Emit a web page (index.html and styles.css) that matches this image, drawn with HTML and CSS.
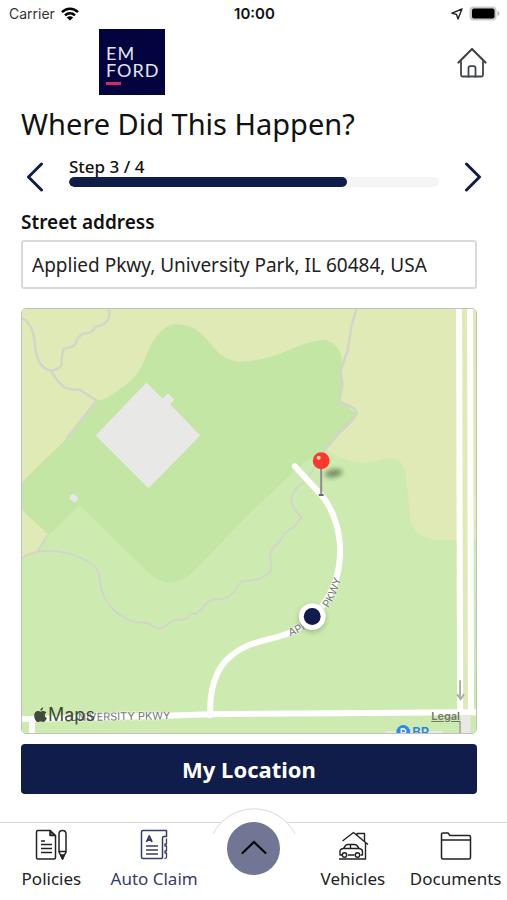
FILE: index.html
```html
<!DOCTYPE html>
<html lang="en">
    <head>
        <meta charset="UTF-8">
        <meta name="viewport" content="width=device-width, initial-scale=1">
        <title>Where Did This Happen?</title>
        <link rel="stylesheet" href="styles.css">
    </head>
    <body>
        <div class="status-bar">
            <div class="carrier">
                <span>Carrier</span>
                <svg width="18" height="14" viewBox="0 0 18 14" fill="none" stroke="#000" stroke-width="2.6">
                    <path d="M1 5.2C5.5 0.6 12.5 0.6 17 5.2"/>
                    <path d="M4 8.4c3-2.8 7-2.8 10 0"/>
                    <path d="M9 13.6L5.8 10.5c1.8-1.6 4.600-1.600 6.400 0z" fill="#000" stroke="none"/>
                </svg>
            </div>
            <div class="time">10:00</div>
            <div class="battery">
                <svg width="12" height="12" viewBox="0 0 12 12" fill="none" stroke="#222" stroke-width="1.4" stroke-linejoin="round">
                    <path d="M11 1L1 5.200l4.500 1.200L7 11z"/>
                </svg>
                <svg width="31" height="15" viewBox="0 0 31 15">
                    <rect x="0.500" y="0.500" width="27" height="14" rx="4" fill="#c9c9c5"/>
                    <path d="M28.500 5c2.500 1 2.500 4 0 5z" fill="#b5b5b1"/>
                    <rect x="3" y="2.500" width="22.500" height="10" rx="2" fill="#000"/>
                </svg>
            </div>
        </div>

        <header class="header">
            <div class="logo">
                <span>EM</span>
                <span>FORD</span>
                <i class="logo-dash"></i>
            </div>
            <a class="home" href="#" aria-label="Home">
                <svg width="30" height="31" viewBox="0 0 30 31" fill="none" stroke="#414549" stroke-width="1.800" stroke-linejoin="round" stroke-linecap="round">
                    <path d="M1.500 15.500L15 2l13.500 13.500" stroke-width="2.200"/>
                    <path d="M4 14.500V28q0 1.500 1.500 1.500h19q1.500 0 1.500-1.500V14.500"/>
                    <path d="M11.500 29.500V21q0-1.800 1.800-1.800h3.400q1.800 0 1.800 1.800v8.500"/>
                </svg>
            </a>
        </header>

        <main class="main">
            <h1>Where Did This Happen?</h1>

            <div class="steps">
                <button class="arrow" type="button" aria-label="Previous step">
                    <svg width="18" height="30" viewBox="0 0 18 30"><path d="M15.500 2L2.500 15l13 13"/></svg>
                </button>
                <div class="step">
                    <label for="progress">Step 3 / 4</label>
                    <progress id="progress" value="3" max="4"></progress>
                </div>
                <button class="arrow" type="button" aria-label="Next step">
                    <svg width="18" height="30" viewBox="0 0 18 30"><path d="M2.500 2l13 13-13 13"/></svg>
                </button>
            </div>

            <label class="field-label" for="address">Street address</label>
            <input class="field" id="address" type="text" value="Applied Pkwy, University Park, IL 60484, USA">

            <div class="map">
                <svg class="map-canvas" viewBox="21 308 456 426" preserveAspectRatio="xMidYMid slice">
                    <defs>
                        <filter id="blur" x="-50%" y="-50%" width="200%" height="200%"><feGaussianBlur stdDeviation="2.500"/></filter>
                        <path id="road-label" d="M290 637Q316 628 331 605Q341 588 346 562"/>
                    </defs>
                    <!-- land -->
                    <rect x="21" y="308" width="456" height="426" fill="#cdebb0"/>
                    <path fill="#e0eab7" d="M21 308H477V540H440Q414 538 411 520L407 478Q405 456 388 458Q372 463 358 462Q340 460 325 448L240 400L21 490Z"/>
                    <path fill="#e0eab7" d="M21 505L48 535L37 551L21 558Z"/>
                    <path fill="#c3e6a5" d="M21 482L66 438L97 400Q107 399 120 388Q132 380 140 368L151 343Q163 324 176 323L191 326Q201 331 212 345Q223 360 240 361Q265 360 287 350Q310 340 325 339Q342 343 343 365L341 371L343 385L340 398L346 405L357 413L326 449L302 464L250 513L195 570Q170 595 146 571L92 518L79 505L48 535L21 510Z"/>
                    <!-- trails -->
                    <g fill="none" stroke="#d3d5c8" stroke-width="2.500" stroke-linejoin="round" stroke-linecap="round">
                        <path d="M21 317Q33 324 34 345Q36 367 50 370Q57 382 64 387Q72 390 79 389Q87 395 96 400L66 438"/>
                        <path d="M108 308Q112 322 95 326Q91 333 82 333Q76 337 75 343Q71 347 63 348Q60 356 61 364Q58 369 50 370"/>
                        <path d="M357 308L352 325L348 350L341 370L343 385Q339 400 341 402Q359 408 357 414Q350 424 339 433L325 450"/>
                        <path stroke-width="2" d="M325 450L313 470L305 481Q293 490 292 497Q289 505 302 517L295 526L284 534L279 543Q270 548 270 557L272 569Q265 580 250 581Q240 580 237 588Q229 600 222 599Q207 599 204 606Q198 616 191 614Q186 620 182 620Q170 620 167 625Q160 632 152 626Q147 622 135 623Q118 618 106 602Q101 595 98 573Q95 564 80 558Q64 551 50 551Q34 550 21 558"/>
                        <path stroke-width="2" d="M37 551L46 536"/>
                    </g>
                    <!-- buildings -->
                    <path fill="#e8e9e6" d="M146 382L162 398L168 393L174 399L170 404L200 435L148 488L95 435Z"/>
                    <rect x="69" y="495" width="8" height="6" rx="2" fill="#e8e9e6" transform="rotate(40 73 498)"/>
                    <!-- roads -->
                    <path d="M466 308V710" stroke="#e0eab7" stroke-width="6"/>
                    <g fill="none" stroke="#fff" stroke-width="6">
                        <path d="M295 466L321 494C345 522 352 580 312 618C282 648 254 632 225 662Q209 681 210 716" stroke-linecap="round"/>
                        <path d="M21 720L150 717L210 715L477 713"/>
                        <path d="M31 720V734"/>
                        <path d="M460 308L461 712"/>
                        <path d="M471 308L472 712"/>
                    </g>
                    <path d="M464 716V734M469 716V734" stroke="#ebe8e2" stroke-width="5"/>
                    <path d="M461 681V698M458 695L461.500 700L465 695M461 722V734" fill="none" stroke="#a9a9a9" stroke-width="1.800"/>
                    <!-- road names -->
                    <g class="road-name">
                        <text x="69" y="722" transform="rotate(-1 69 722)">UNIVERSITY PKWY</text>
                        <text><textPath href="#road-label">APPLIED PKWY</textPath></text>
                    </g>
                    <!-- gas station -->
                    <rect x="386" y="732" width="58" height="4" fill="#e8e9e6"/>
                    <circle cx="404" cy="733" r="7" fill="#2f8ae8"/>
                    <path d="M402 737V730H405Q408 732 405 734H402" fill="none" stroke="#fff" stroke-width="1.500"/>
                    <text class="poi" x="413" y="738">BP</text>
                    <!-- pin -->
                    <ellipse cx="334" cy="473" rx="9" ry="4" fill="#405030" opacity="0.600" filter="url(#blur)" transform="rotate(-10 334 473)"/>
                    <path d="M321.500 468V494" stroke="#8b8e8b" stroke-width="2"/>
                    <path d="M319 495H324" stroke="#686c70" stroke-width="2"/>
                    <circle cx="321.500" cy="460.500" r="8.500" fill="#fb382e"/>
                    <circle cx="319" cy="457.500" r="2" fill="#ffd0c8"/>
                    <!-- current position -->
                    <circle cx="312.500" cy="619" r="14" fill="#50703c" opacity="0.350" filter="url(#blur)"/>
                    <circle cx="312.500" cy="617" r="13.500" fill="#fff"/>
                    <circle cx="312.500" cy="617" r="8.500" fill="#101c49"/>
                </svg>
                <div class="map-brand">
                    <svg width="13" height="16" viewBox="0 0 13 16" fill="#414b3a">
                        <path d="M9.200 0.300C9.300 2 8 3.800 6.300 3.800C6.200 2.200 7.600 0.600 9.200 0.300z"/>
                        <path d="M6.500 4.700C7.500 4.700 8.200 4 9.500 4Q11.500 4 12.500 5.600C10.100 7 10.500 10.200 12.900 11.100C12.200 13 10.900 15 9.500 15C8.400 15 8 14.400 6.700 14.400C5.400 14.400 5 15 3.900 15C2.100 15 0.200 11.700 0.200 8.700C0.200 5.700 2 4.100 3.800 4.100C5 4.100 5.800 4.700 6.500 4.700z"/>
                    </svg>
                    <span>Maps</span>
                </div>
                <a class="map-legal" href="#">Legal</a>
            </div>

            <button class="location" type="button">My Location</button>
        </main>

        <nav class="nav">
            <a class="nav-item" href="#">
                <svg width="32" height="32" viewBox="0 0 32 32" fill="none" stroke="#222" stroke-width="1.500" stroke-linejoin="round">
                    <path d="M15 1.500H3Q1.500 1.500 1.500 3V28.500Q1.500 30 3 30H19Q20.500 30 20.500 28.500V7z"/>
                    <path d="M15 1.500V6.500H20.500z" fill="#666"/>
                    <path d="M6 12h4M6 15.500h11M6 19.500h11M6 23.500h11"/>
                    <path d="M24 5Q24 1.500 27.500 1.500T31 5V23L27.500 30L24 23zM24 22.500H31"/>
                    <path d="M26 26H29L27.500 30z" fill="#222"/>
                </svg>
                <span>Policies</span>
            </a>
            <a class="nav-item active" href="#">
                <svg width="32" height="32" viewBox="0 0 32 32" fill="none" stroke="#343b70" stroke-width="1.500" stroke-linejoin="round">
                    <path d="M24.500 29.500H5Q3.500 29.500 3.500 28V3Q3.500 1.500 5 1.500H28.500V7.500H26Q24.500 7.500 24.500 9V29.500"/>
                    <path d="M28.500 9.500V15H27V17H28.500V22H27V24H28.500V28Q28.500 29.500 26.500 29.500" stroke-width="1.300"/>
                    <path d="M8 17H20M8 21H20M8 25H20"/>
                    <path d="M8.500 13L11.200 7L14 13M9.500 11H13" stroke-width="1.800"/>
                </svg>
                <span>Auto Claim</span>
            </a>
            <div class="nav-center">
                <svg class="nav-arc" width="84" height="27" viewBox="0 0 84 27">
                    <path d="M1 26A46 46 0 0 1 83 26" fill="#fff" stroke="#d8d8d8"/>
                </svg>
                <button class="nav-up" type="button" aria-label="More">
                    <svg width="26" height="16" viewBox="0 0 26 16"><path d="M1.500 14L13 3l11.500 11"/></svg>
                </button>
            </div>
            <a class="nav-item" href="#">
                <svg width="32" height="32" viewBox="0 0 32 32" fill="none" stroke="#222" stroke-width="1.400" stroke-linejoin="round">
                    <path d="M5.500 12L16.500 3.500L31 15.500M20 6V4.500H27.500V12M28.500 14V30H2"/>
                    <path d="M5 26H3V21.500Q4 19.500 6.500 19.500L8.500 16.500Q9.500 15.500 11 15.500H17Q19 15.500 20 16.500L22 19.500Q25.500 20 25.500 22.500V26H23.500M11 26H17.500M6.500 19.500H22M13.500 15.500V19.500"/>
                    <circle cx="7.500" cy="26" r="2.200"/>
                    <circle cx="20.500" cy="26" r="2.200"/>
                </svg>
                <span>Vehicles</span>
            </a>
            <a class="nav-item" href="#">
                <svg width="32" height="32" viewBox="0 0 32 32" fill="none" stroke="#222" stroke-width="1.500" stroke-linejoin="round">
                    <path d="M3 30Q1.500 30 1.500 28.500V5Q1.500 4 3 4H8L10 6.500H29Q30.500 6.500 30.500 8V28.500Q30.500 30 29 30zM1.500 11H30.500"/>
                </svg>
                <span>Documents</span>
            </a>
        </nav>
    </body>
</html>
```
FILE: styles.css
```css
* {
    box-sizing: border-box;
}
body {
    display: flex;
    flex-direction: column;
    min-height: 100vh;
    margin: 0;
    background: #fff;
    color: #111;
    font-family: "Noto Sans", "Open Sans", sans-serif;
}
svg {
    display: block;
    flex: none;
}
button {
    font-family: inherit;
    border: none;
    cursor: pointer;
}

/* status bar */
.status-bar {
    display: grid;
    grid-template-columns: 1fr auto 1fr;
    align-items: center;
    height: 27px;
    padding: 0 7px 0 9px;
    font-family: Inter, sans-serif;
    font-size: 15px;
}
.carrier, .battery {
    display: flex;
    align-items: center;
    gap: 6px;
}
.carrier {
    color: #333;
    font-size: 14px;
}
.time {
    font-weight: 600;
}
.battery {
    justify-content: flex-end;
}

/* header */
.header {
    display: flex;
    justify-content: space-between;
    align-items: center;
    padding: 2px 20px 0 99px;
}
.logo {
    display: flex;
    flex-direction: column;
    width: 66px;
    height: 66px;
    padding: 16px 7px 0;
    background: #03043f;
    color: #e4e6f5;
    font-family: Lato, sans-serif;
    font-size: 18px;
    line-height: 17px;
    letter-spacing: 1px;
}
.logo-dash {
    width: 15px;
    height: 3px;
    margin-top: 3px;
    background: #d92765;
}

/* content */
.main {
    display: flex;
    flex: 1;
    flex-direction: column;
    padding: 0 30px 28px 21px;
}
h1 {
    margin: 9px 0 0;
    font-size: 29px;
    font-weight: 400;
    line-height: 40px;
}
.steps {
    display: flex;
    align-items: flex-start;
    justify-content: space-between;
    gap: 25px;
    margin-top: 12px;
    padding-left: 5px;
    margin-right: -5px;
}
.arrow {
    padding: 6px 0 0;
    background: none;
}
.arrow path {
    fill: none;
    stroke: #101c49;
    stroke-width: 3;
    stroke-linecap: round;
    stroke-linejoin: round;
}
.step {
    flex: 1;
}
.step label {
    display: block;
    font-size: 17px;
    font-weight: 500;
    line-height: 21px;
}
progress {
    display: block;
    width: 100%;
    height: 10px;
    border: none;
    border-radius: 5px;
    background: #f5f5f5;
    overflow: hidden;
    appearance: none;
}
progress::-webkit-progress-bar {
    background: #f5f5f5;
}
progress::-webkit-progress-value {
    border-radius: 5px;
    background: #101c49;
}
.field-label {
    margin-top: 16px;
    font-size: 19px;
    font-weight: 600;
    line-height: 28px;
}
.field {
    width: 100%;
    height: 49px;
    margin-top: 4px;
    padding: 0 9px;
    border: 2px solid #dadada;
    border-radius: 3px;
    background: #fff;
    color: #222;
    font-family: inherit;
    font-size: 19px;
}

/* map */
.map {
    position: relative;
    flex: 1;
    min-height: 300px;
    margin-top: 19px;
    border: 1px solid #bfc2bb;
    border-radius: 5px;
    overflow: hidden;
}
.map-canvas {
    position: absolute;
    width: 100%;
    height: 100%;
}
.road-name {
    fill: #707670;
    font-family: Inter, sans-serif;
    font-size: 11px;
    paint-order: stroke;
    stroke: #fff;
    stroke-width: 1px;
}
.poi {
    fill: #2f80dc;
    font-family: Inter, sans-serif;
    font-size: 13px;
    font-weight: 600;
}
.map-brand {
    position: absolute;
    left: 12px;
    bottom: 8px;
    display: flex;
    align-items: center;
    gap: 1px;
    color: #414b3a;
    font-family: Inter, sans-serif;
    font-size: 18px;
    line-height: 20px;
}
.map-legal {
    position: absolute;
    right: 16px;
    bottom: 8px;
    color: #70786a;
    font-family: Inter, sans-serif;
    font-size: 11px;
    font-weight: 600;
    line-height: 18px;
}
.location {
    height: 50px;
    margin-top: 10px;
    border-radius: 4px;
    background: #101c49;
    color: #fff;
    font-size: 22px;
    font-weight: 700;
}

/* bottom navigation */
.nav {
    display: grid;
    grid-template-columns: 1fr 1fr 96px 1fr 1fr;
    height: 78px;
    border-top: 1px solid #d8d8d8;
}
.nav-item {
    display: flex;
    flex-direction: column;
    align-items: center;
    padding-top: 6px;
    color: #222;
    font-size: 17px;
    line-height: 24px;
    text-decoration: none;
    white-space: nowrap;
}
.nav-item span {
    margin-top: 6px;
}
.nav-item.active {
    color: #343b70;
}
.nav-center {
    position: relative;
    display: flex;
    justify-content: center;
}
.nav-arc {
    position: absolute;
    top: -15px;
}
.nav-up {
    position: absolute;
    top: -1px;
    display: flex;
    align-items: center;
    justify-content: center;
    width: 53px;
    height: 53px;
    padding: 0 0 4px;
    border-radius: 50%;
    background: #707693;
}
.nav-up path {
    fill: none;
    stroke: #000;
    stroke-width: 2;
    stroke-linecap: round;
}
```
